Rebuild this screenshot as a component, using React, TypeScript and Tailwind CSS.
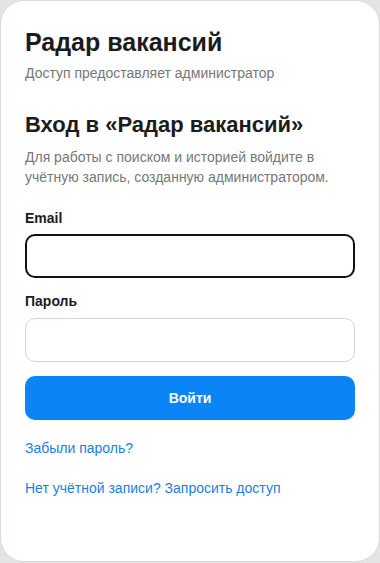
import { useState } from "react";

export default function App() {
  const [email, setEmail] = useState("");
  const [password, setPassword] = useState("");

  return (
    <div className="min-h-[563px] bg-[#e2e5e2] font-['Liberation_Sans',Arial,sans-serif]">
      <div className="h-[562px] rounded-[24px] border border-[#d8dcd8] bg-white px-6 pt-[25px]">
        <h1 className="text-[25px] leading-8 font-bold text-[#1c1c1c]">Радар вакансий</h1>
        <div className="mt-[5px] text-sm leading-5 text-[#777]">Доступ предоставляет администратор</div>

        <h2 className="mt-[28px] text-[22px] leading-7 font-bold text-[#1c1c1c]">Вход в «Радар вакансий»</h2>
        <p className="mt-[9px] text-sm leading-[1.4] text-[#777]">
          Для работы с поиском и историей войдите в учётную запись, созданную администратором.
        </p>

        <form className="mt-[21px] flex flex-col" onSubmit={(e) => e.preventDefault()}>
          <label className="text-sm leading-5 font-bold text-[#1c1c1c]">Email</label>
          <input
            value={email}
            onChange={(e) => setEmail(e.target.value)}
            className="mt-[6px] h-11 w-full rounded-[10px] border-2 border-[#111] px-3 text-sm outline-none"
          />
          <label className="mt-[13px] text-sm leading-5 font-bold text-[#1c1c1c]">Пароль</label>
          <input
            type="password"
            value={password}
            onChange={(e) => setPassword(e.target.value)}
            className="mt-[7px] h-11 w-full rounded-[10px] border border-[#d4d4d4] px-3 text-sm outline-none"
          />
          <button className="mt-[14px] h-11 w-full rounded-[10px] bg-[#0b85f6] text-sm font-bold text-white">Войти</button>
        </form>

        <div className="mt-[18px] text-sm leading-5 text-[#1a7fe4]">
          <a href="#">Забыли пароль?</a>
        </div>
        <div className="mt-[20px] text-sm leading-5 text-[#1a7fe4]">
          <a href="#">Нет учётной записи? Запросить доступ</a>
        </div>
      </div>
    </div>
  );
}
